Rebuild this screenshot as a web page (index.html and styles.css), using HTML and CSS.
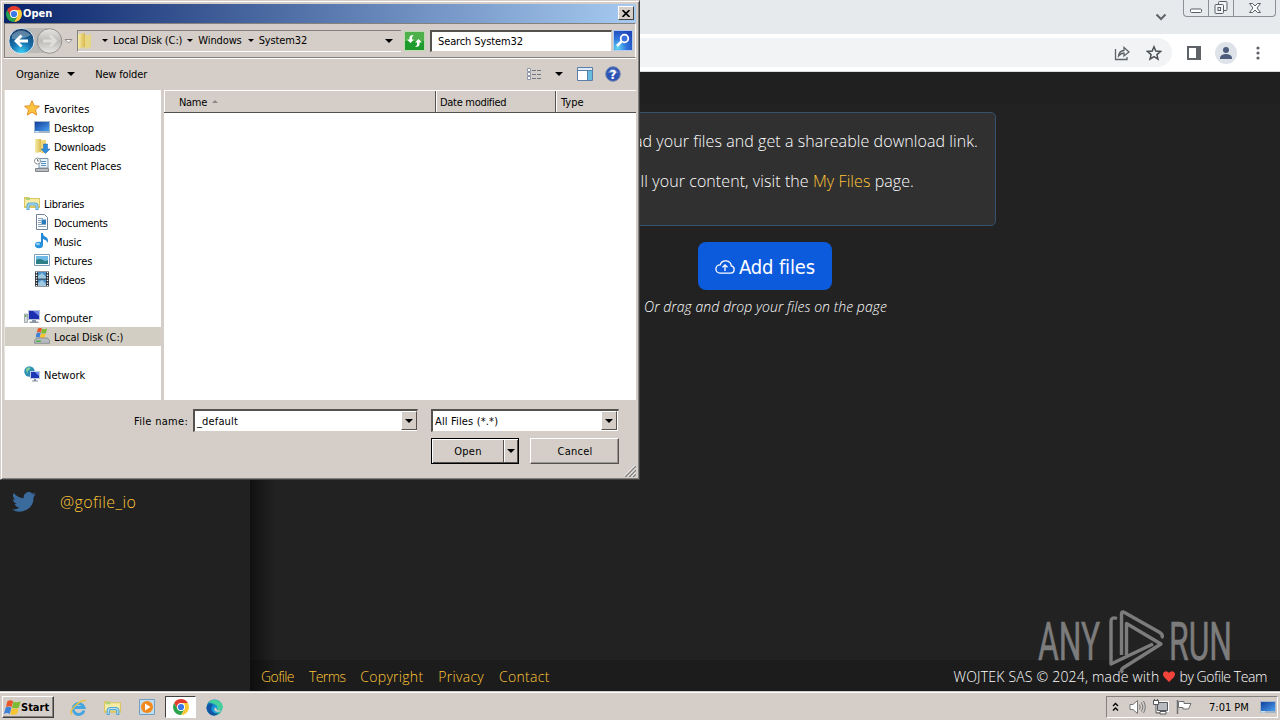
FILE: index.html
```html
<!DOCTYPE html>
<html lang="en">
<head>
  <meta charset="UTF-8">
  <meta name="viewport" content="width=device-width, initial-scale=1.0">
  <title>Gofile</title>
  <link rel="stylesheet" href="styles.css">
</head>
<body>
  <svg class="defs" width="0" height="0">
    <defs>
      <linearGradient id="sky" x1="0" y1="0" x2="1" y2="1">
        <stop offset="0" stop-color="#123f9c"/>
        <stop offset="1" stop-color="#4aa0f0"/>
      </linearGradient>
      <linearGradient id="folder" x1="0" y1="0" x2="1" y2="0">
        <stop offset="0" stop-color="#f7eda6"/>
        <stop offset="1" stop-color="#d9b84e"/>
      </linearGradient>
      <linearGradient id="edge" x1="0" y1="0" x2="1" y2="1">
        <stop offset="0" stop-color="#0c59a4"/>
        <stop offset=".6" stop-color="#1a9fe0"/>
        <stop offset="1" stop-color="#5bd670"/>
      </linearGradient>
      <radialGradient id="orb" cx=".5" cy=".95" r=".9">
        <stop offset="0" stop-color="#3fd0f5"/>
        <stop offset=".45" stop-color="#1673b0"/>
        <stop offset="1" stop-color="#17406d"/>
      </radialGradient>
      <linearGradient id="orb-off" x1="0" y1="0" x2="0" y2="1">
        <stop offset="0" stop-color="#e6e5e3"/>
        <stop offset=".5" stop-color="#bdbbb8"/>
        <stop offset="1" stop-color="#e9e8e6"/>
      </linearGradient>
      <radialGradient id="glass" cx=".2" cy=".9" r="1">
        <stop offset="0" stop-color="#5fd8f2"/>
        <stop offset=".5" stop-color="#2f74de"/>
        <stop offset="1" stop-color="#2347b8"/>
      </radialGradient>
    </defs>
    <symbol id="chrome" viewBox="0 0 16 16">
      <path fill="#e33b2e" d="M1.1 4A8 8 0 0 1 14.9 4L8 4.2 4.6 10z"/>
      <path fill="#fcc934" d="M14.9 4A8 8 0 0 1 8 16L11.4 10 8 4z"/>
      <path fill="#2ba24c" d="M1.1 4A8 8 0 0 0 8 16L11.4 10 8 11.6 4.6 10z"/>
      <circle cx="8" cy="8" r="4" fill="#fff"/>
      <circle cx="8" cy="8" r="3.1" fill="#3b78e7"/>
    </symbol>
    <symbol id="flag" viewBox="0 0 16 16">
      <path fill="#e8562a" d="M3.2 2Q6 .4 8.600 2L7.200 7.600Q4.600 6 1.800 7.600z"/>
      <path fill="#7dbb32" d="M9 2.300Q12 4 15.600 2L14 8Q10.500 9.600 7.600 8z"/>
      <path fill="#3b82d6" d="M1.600 8Q4.300 6.600 7 8.200L5.400 14Q3 12.400 0 14z"/>
      <path fill="#f6c433" d="M7.400 8.500Q10.300 10 13.800 8.600L12.200 14.200Q9 15.600 5.800 14z"/>
    </symbol>
    <symbol id="libraries" viewBox="0 0 16 16">
      <path fill="#dcc660" d="M0 2h5l1 1h10v10H0z"/>
      <path fill="#f6eca5" d="M1 4h14v7H1z"/>
      <path fill="#a9d47c" d="M2 3h4v2H2z"/>
      <path fill="none" stroke="#54a8d8" stroke-width="3" d="M4 15v-4q0-2 2-2h5q2 0 2 2v4"/>
      <path fill="none" stroke="#bfe2f3" d="M4 14v-3q0-2 2-2h5q2 0 2 2v3"/>
    </symbol>
    <symbol id="monitor" viewBox="0 0 16 16">
      <path fill="#a4b7c9" d="M0 2h16v12H0z"/>
      <path fill="url(#sky)" d="M1 3h14v9H1z"/>
      <path fill="#c9e2f5" d="M1 12h4v1.500H1z"/>
    </symbol>
  </svg>

  <div class="screen">
    <!-- browser window -->
    <div class="browser">
      <div class="tabstrip">
        <svg class="tab-search" width="12" height="8" viewBox="0 0 12 8"><path d="M1.500 1.500 6 6l4.500-4.500" fill="none" stroke="#5f6368" stroke-width="2"/></svg>
        <div class="win-buttons">
          <span><svg width="14" height="8" viewBox="0 0 14 8"><rect x="1.500" y="3" width="11" height="3.500" rx="1" fill="#fff" stroke="#5a5f68"/></svg></span>
          <span><svg width="14" height="14" viewBox="0 0 14 14" fill="#f3f4f6" stroke="#5a5f68"><rect x="4.500" y=".5" width="8.500" height="9" rx="1"/><rect x="1" y="3.500" width="8.500" height="9" rx="1"/><rect x="4" y="6.500" width="2.500" height="3"/></svg></span>
          <span class="wide"><svg width="14" height="12" viewBox="0 0 14 12"><path d="M1.500 1.500h3L7 4l2.500-2.500h3L9 6l3.500 4.500h-3L7 8l-2.500 2.500h-3L5 6z" fill="#fff" stroke="#5a5f68"/></svg></span>
        </div>
      </div>
      <div class="toolbar">
        <div class="omnibox">
          <svg width="16" height="16" viewBox="0 0 16 16" fill="none" stroke="#5f6368" stroke-width="1.300"><path d="M1.500 4v10.500H13V12"/><path d="M4.500 11Q5 6 10 5.500V2.500l5 4.500-5 4V8Q7 8 4.500 11z"/></svg>
          <svg width="16" height="16" viewBox="0 0 16 16"><path d="M8 1.800l1.800 4.300 4.700.4-3.600 3.100 1.100 4.600L8 11.700l-4 2.500 1.100-4.600L1.500 6.500l4.700-.4z" fill="none" stroke="#4d5156" stroke-width="1.500"/></svg>
        </div>
        <svg width="14" height="14" viewBox="0 0 14 14"><path fill="#5f6368" d="M0 0h14v14H0z"/><path fill="#fff" d="M2 2h7v10H2z"/></svg>
        <svg class="avatar" width="22" height="22" viewBox="0 0 22 22"><circle cx="11" cy="11" r="11" fill="#dee3ea"/><circle cx="11" cy="8" r="3" fill="#4d5b7c"/><path fill="#4d5b7c" d="M5 17v-1.500Q6 12 11 12t6 3.500V17z"/></svg>
        <svg width="4" height="14" viewBox="0 0 4 14" fill="#5f6368"><circle cx="2" cy="2" r="1.600"/><circle cx="2" cy="7" r="1.600"/><circle cx="2" cy="12" r="1.600"/></svg>
      </div>

      <div class="page">
        <aside class="sidebar">
          <a class="social">
            <svg width="24" height="20" viewBox="0 0 24 20"><path fill="#3b6a9c" d="M24 2.400a10 10 0 0 1-2.800.8A4.900 4.900 0 0 0 23.300.5a10 10 0 0 1-3.100 1.200A4.900 4.900 0 0 0 11.800 6.200 14 14 0 0 1 1.700 1a4.900 4.900 0 0 0 1.500 6.600A5 5 0 0 1 1 7c0 2.400 1.700 4.400 3.900 4.900a5 5 0 0 1-2.200.1 4.900 4.900 0 0 0 4.600 3.400A10 10 0 0 1 0 17.500 14 14 0 0 0 21.500 5z"/></svg>
            <span>@gofile_io</span>
          </a>
        </aside>
        <main class="content">
          <div class="page-top"></div>
          <div class="upload">
            <div class="card">
              <p class="line-one">Upload your files and get a shareable download link.</p>
              <p class="line-two">To see all your content, visit the <a>My Files</a> page.</p>
            </div>
            <button class="add-files">
              <svg width="20" height="14" viewBox="0 0 20 14" fill="none" stroke="#fff" stroke-width="1.300"><path d="M5 13.200h10.500a3.700 3.700 0 0 0 .8-7.300A5.700 5.700 0 0 0 5.200 4.800 4.200 4.200 0 0 0 5 13.200z"/><path d="M10 11V5M7.500 7.300 10 4.800l2.500 2.500"/></svg>
              <span>Add files</span>
            </button>
            <p class="hint">Or drag and drop your files on the page</p>
          </div>
          <footer class="footer">
            <nav>
              <a class="short">Gofile</a><a class="short">Terms</a><a class="long">Copyright</a><a class="long">Privacy</a><a class="long">Contact</a>
            </nav>
            <div class="credits">
              <span class="made">WOJTEK SAS © 2024, made with</span>
              <svg width="12" height="11" viewBox="0 0 12 11"><path fill="#f4433a" d="M6 11 1 6Q-1 3 1 1q2.500-2 5 .8Q8.500-1 11 1q2 2 0 5z"/></svg>
              <span class="team">by Gofile Team</span>
            </div>
          </footer>
        </main>
      </div>
    </div>

    <!-- watermark -->
    <svg class="watermark" width="200" height="66" viewBox="0 0 200 66">
      <text x="0" y="0" transform="translate(2 51) scale(.62 1)" textLength="100" lengthAdjust="spacingAndGlyphs">ANY</text>
      <g fill="none" stroke="#b4b4b4" stroke-width="3.400" stroke-linejoin="round">
        <path d="M81 9.500q-6-2-6 3V55l42-20"/>
        <path d="M85.500 46V5q0-3 3-1.500L123 23q5 3 2.500 6"/>
        <path d="M90.500 46V14.500L125 35 87 59q-3 2 0 4.500"/>
      </g>
      <text x="0" y="0" transform="translate(133 51) scale(.63 1)" textLength="100" lengthAdjust="spacingAndGlyphs">RUN</text>
    </svg>

    <!-- file picker -->
    <div class="dialog">
      <div class="titlebar">
        <svg width="16" height="16"><use href="#chrome"/></svg>
        <span class="title">Open</span>
        <span class="close"><svg width="8" height="7" viewBox="0 0 8 7"><path d="M.5 0 7.500 7M7.500 0 .5 7" stroke="#000" stroke-width="1.600"/></svg></span>
      </div>

      <div class="navbar">
        <svg class="travel" width="68" height="28" viewBox="0 0 68 28">
          <path fill="#bcbab7" d="M12 1h28v25H12z"/>
          <circle cx="13.500" cy="14" r="12.700" fill="url(#orb)" stroke="#dfe6ec"/>
          <path d="M4 8q9-9 19 0-9 5-19 4z" fill="#fff" opacity=".3"/>
          <path fill="none" stroke="#fff" stroke-width="2.800" d="M20 14H9M13.500 8.500 8 14l5.500 5.500"/>
          <circle cx="41.500" cy="14" r="12.300" fill="url(#orb-off)" stroke="#94918e"/>
          <path fill="none" stroke="#dededc" stroke-width="2.800" d="M35 14h11M42 8.500l5.500 5.500-5.500 5.500"/>
          <path d="M57 12.500h7L60.500 16z" fill="#fff" stroke="#8d8a86"/>
        </svg>
        <div class="address">
          <svg class="addr-folder" width="14" height="18" viewBox="0 0 14 18"><path fill="url(#folder)" d="M0 2 7 1v14l-7 2z"/><path fill="#e7d682" d="M7 3h6v12l-6 2z"/></svg>
          <i class="arrow a1"></i><span>Local Disk (C:)</span>
          <i class="arrow a2"></i><span>Windows</span>
          <i class="arrow a3"></i><span>System32</span>
          <i class="arrow big last"></i>
        </div>
        <svg class="refresh" width="21" height="20" viewBox="0 0 21 20"><path fill="#b8dcae" d="M0 0h21v20H0z"/><path fill="#4db04a" d="M1 1h19v18H1z"/><path fill="#1f9a2e" d="M1 10h19v9H1z"/><path d="M9.500 4Q4.500 4 5.500 8.500H3L6.500 12 10 8.500H8V6.500z" fill="#fff"/><path d="M11 16q5.500 0 4.500-4.500H18L14.500 8 11 11.500h2V14z" fill="#fff"/></svg>
        <div class="search">Search System32</div>
        <svg class="search-btn" width="20" height="21" viewBox="0 0 20 21"><path fill="#b5cbed" d="M0 0h20v21H0z"/><path fill="url(#glass)" d="M1 1h18v19H1z"/><circle cx="11.500" cy="8.500" r="3.800" fill="#3c70df" stroke="#fff" stroke-width="1.800"/><path d="m8.500 11.500-4.500 4.500" stroke="#fff" stroke-width="2.600"/></svg>
      </div>

      <div class="commands">
        <span class="cmd-org">Organize</span><i class="arrow big"></i>
        <span class="cmd-new">New folder</span>
        <div class="cmd-right">
          <svg width="16" height="13" viewBox="0 0 16 13"><path d="M1.500.500h3v3h-3zM1.500 4.500h3v3h-3zM1.500 8.500h3v3h-3z" fill="#fff" stroke="#8f96a5"/><path d="M6 2.500h4M11 2.500h4M6 6.500h4M11 6.500h4M6 10.500h4M11 10.500h4" stroke="#6d7686"/></svg>
          <i class="arrow big"></i>
          <svg class="preview" width="16" height="14" viewBox="0 0 16 14"><path fill="#fff" stroke="#5a7ea8" d="M.5.500h15v13H.5z"/><path fill="#dcebf6" d="M1 1h14v2H1z"/><path fill="#66bcdc" d="M10 3h5v10h-5z"/><path stroke="#5a7ea8" d="M1 3.500h14M10.500 3v10"/></svg>
          <svg width="16" height="16" viewBox="0 0 16 16"><circle cx="8" cy="8" r="7.300" fill="#2d54b4" stroke="#7086b0"/><path d="M2.500 7q5-9 11 0z" fill="#fff" opacity=".25"/><text class="q" x="8" y="12.500">?</text></svg>
        </div>
      </div>

      <div class="panes">
        <div class="tree">
          <div class="node"><svg width="16" height="16" viewBox="0 0 16 16"><path d="M8 .7l2.200 5 5.300.5-4 3.600 1.200 5.300L8 12.300l-4.700 2.800 1.200-5.300-4-3.600 5.300-.5z" fill="#fcc340" stroke="#e08a20" stroke-width=".9"/></svg><span class="loose">Favorites</span></div>
          <div class="node sub"><svg width="16" height="16"><use href="#monitor"/></svg><span class="snug">Desktop</span></div>
          <div class="node sub"><svg width="16" height="16" viewBox="0 0 16 16"><path fill="url(#folder)" d="M1 1h6v13l-6 1z"/><path fill="#efd67a" d="M7 2h5v13H7z"/><path fill="#2f8bd9" stroke="#1c66b0" stroke-width=".5" d="M9.500 6h4v5H16l-4.500 4.500L7 11h2.500z"/></svg><span class="tight">Downloads</span></div>
          <div class="node sub"><svg width="16" height="16" viewBox="0 0 16 16"><path fill="#e9f2f8" stroke="#7896a8" d="M5 1.500h9V11H5z"/><path stroke="#5b93bf" d="M7 4.500h5M7 6.500h5M7 8.500h5"/><path fill="#b9bdc0" stroke="#80868b" d="M1.500 11.500h13v3h-13z"/><circle cx="3.500" cy="4" r="3" fill="#fff" stroke="#8c969d"/><path d="M3.500 2v2h1.500" fill="none" stroke="#555" stroke-width=".8"/></svg><span class="snug">Recent Places</span></div>
          <div class="node gap"></div>
          <div class="node"><svg width="16" height="16"><use href="#libraries"/></svg><span class="tight">Libraries</span></div>
          <div class="node sub"><svg width="16" height="16" viewBox="0 0 16 16"><path fill="#fff" stroke="#71839a" d="M2.500.500h8l3 3v12h-11z"/><path stroke="#8aa3c0" d="M4 4.500h5M4 6.500h3M4 8.500h3M4 10.500h8M4 12.500h8"/><path fill="#2b7bb9" d="M7.500 5.500H12V10H7.500z"/></svg><span class="tight">Documents</span></div>
          <div class="node sub"><svg width="16" height="16" viewBox="0 0 16 16"><path fill="#2488d6" d="M7 0h2q0 3 3 4 3 2 1.500 6Q13 7 9 6v6H7z"/><ellipse cx="5" cy="12" rx="4" ry="3.200" fill="#2a93de"/><ellipse cx="4" cy="11" rx="2" ry="1.200" fill="#8fd0f5"/></svg><span class="snug">Music</span></div>
          <div class="node sub"><svg width="16" height="16" viewBox="0 0 16 16"><path fill="#fff" stroke="#7ba0bd" d="M.5 2.500h15v11H.5z"/><path fill="#6fb9e6" d="M2 4h12v5H2z"/><path fill="#2d7f86" d="M2 8q4-2 7 0t5 0v4H2z"/></svg><span class="snug">Pictures</span></div>
          <div class="node sub"><svg width="16" height="16" viewBox="0 0 16 16"><path fill="#252b33" d="M1 .5h14v15H1z"/><path fill="#4b93c8" d="M4 1h8v6.500H4zM4 8.500h8V15H4z"/><path fill="#9fc7df" d="m4 5 4-3 4 4v1.500H4zM4 12l4-3 4 4v2H4z"/><path d="M2.500 1v14M13.500 1v14" stroke="#fff" stroke-width="1.400" stroke-dasharray="1.300 1.300"/></svg><span class="tight">Videos</span></div>
          <div class="node gap"></div>
          <div class="node"><svg width="16" height="16" viewBox="0 0 16 16"><path fill="#d9dedf" stroke="#7d8a8d" stroke-width=".7" d="M.4 5h3v8.500h-3z"/><path fill="#6aa84f" d="M1 6h1.500v2H1z"/><path fill="#b9c3d8" d="M4 1h12v10H4z"/><path fill="#1c2fae" d="M5 2h10v8H5z"/><path fill="#6f86e8" d="M9 2h6v5z"/><path fill="#8c95a5" d="M8 11h4v1.500h2.500V14h-9v-1.500H8z"/></svg><span class="snug">Computer</span></div>
          <div class="node sub selected"><svg width="16" height="16" viewBox="0 0 16 16"><use href="#flag" x="1.500" y="-1" width="12" height="12"/><path fill="#b6bbbf" stroke="#737b80" stroke-width=".7" d="M2.500 10h11l2 2.500v2.800H.5v-2.800z"/><path fill="#54b044" d="M2 12.500h5v1.500H2z"/></svg><span class="snug">Local Disk (C:)</span></div>
          <div class="node gap"></div>
          <div class="node"><svg width="16" height="16" viewBox="0 0 16 16"><circle cx="5.500" cy="5.500" r="5.200" fill="#2b8fb3"/><path fill="#7fd29b" d="M2 3q3-3 5-1L4 5 3 8z"/><path fill="#c2cce0" d="M6 5h10v8H6z"/><path fill="#1c36b5" d="M7 6h8v6H7z"/><path fill="#6f8ff0" d="M11 6h4v4z"/><path fill="#8490a5" d="M10 13h2v1.500h2v1H8v-1h2z"/></svg><span>Network</span></div>
        </div>
        <div class="list">
          <div class="columns">
            <div class="col name"><span>Name</span><i class="sort"></i></div>
            <div class="col date"><span class="tight">Date modified</span></div>
            <div class="col type"><span>Type</span></div>
          </div>
        </div>
      </div>

      <div class="bottom">
        <div class="row">
          <label>File name:</label>
          <div class="combo file"><span>_default</span><b><i class="arrow big"></i></b></div>
          <div class="combo filter"><span>All Files (*.*)</span><b><i class="arrow big"></i></b></div>
        </div>
        <div class="row buttons">
          <div class="btn open"><span>Open</span><b><i class="arrow big"></i></b></div>
          <div class="btn cancel"><span>Cancel</span></div>
        </div>
        <svg class="grip" width="12" height="12" viewBox="0 0 12 12"><path d="M1 12 12 1M5 12l7-7M9 12l3-3" stroke="#808080" stroke-width="1.500"/><path d="M0 11.500 11.500 0M4 11.500l8-8M8 11.500l4-4" stroke="#fff" stroke-width=".8"/></svg>
      </div>
    </div>

    <!-- taskbar -->
    <div class="taskbar">
      <div class="start"><svg width="17" height="17"><use href="#flag"/></svg><span>Start</span></div>
      <div class="quick">
        <span><svg width="17" height="17" viewBox="0 0 17 17"><path d="M14 11.500A5.500 5.500 0 1 1 14 8.500H5" fill="none" stroke="#45a5e0" stroke-width="2.800"/><path d="M2 15.500Q-1 12 6 6T16 2" fill="none" stroke="#e8c13f" stroke-width="1.400"/></svg></span>
        <span><svg width="17" height="17"><use href="#libraries"/></svg></span>
        <span><svg width="16" height="16" viewBox="0 0 16 16"><path fill="#c5dcec" stroke="#6da0c8" d="M.5.500h15v15H.5z"/><circle cx="8" cy="8" r="6" fill="#f08a1c"/><path fill="#fff" d="m6 4.500 5.500 3.500L6 11.500z"/></svg></span>
        <span class="running"><svg width="16" height="16"><use href="#chrome"/></svg></span>
        <span><svg width="17" height="17" viewBox="0 0 17 17"><circle cx="8.500" cy="8.500" r="8" fill="url(#edge)"/><path fill="#45cf9d" d="M2 4Q6-1 12 1.500q6 3 4.500 8-2 2.500-5.500 1.500 1.500-4-2-5.500Q5 3 2 4z"/><path fill="#1256a3" d="M.6 8Q2 4 7 5.500 4 8 6 12q2 3 7 2.500-5 4-9.500.5Q0 12 .6 8z"/><path fill="#d5cec8" d="M9 8.500Q7 11 10 12.500q3 1 6-.8-2-.2-5.500-.7 1-1.500-1.500-2.500z"/></svg></span>
      </div>
      <div class="tray">
        <svg width="7" height="10" viewBox="0 0 7 10" fill="none" stroke="#000" stroke-width="1.400"><path d="m1 4 2.500-2.500L6 4M1 8.500 3.500 6 6 8.500"/></svg>
        <svg class="vol" width="17" height="16" viewBox="0 0 17 16" fill="none" stroke="#75777a"><path fill="#fff" d="M1 5.500h3L8.500 1.500v13L4 10.500H1z"/><path d="M10.500 5.500q1.500 2.500 0 5M12.500 3.500q3 4.500 0 9M14.500 2q3.500 6 0 12"/></svg>
        <svg class="net" width="16" height="16" viewBox="0 0 16 16" stroke="#55585c"><path fill="#b8bbbd" stroke="#fff" stroke-width="3" d="M4.500 3.500h10v8h-10z"/><path fill="#b8bbbd" d="M4.500 3.500h10v8h-10z"/><path fill="#fff" d="M.5 1.500h5v4h-5zM7 12.500h6V15H7z"/><path fill="none" d="M3 6v8h4M1.500 0v2M4.500 0v2"/></svg>
        <svg class="action" width="16" height="16" viewBox="0 0 16 16"><path d="M1.500 1v14" stroke="#6d7073" stroke-width="1.500"/><path fill="#fff" stroke="#6d7073" d="M2.500 2.500H8v2h7L12.500 10H7V8.500H2.500z"/></svg>
        <span class="clock">7:01 PM</span>
        <svg class="desk" width="16" height="14" viewBox="0 1 16 14"><use href="#monitor" width="16" height="16"/></svg>
      </div>
    </div>
  </div>
</body>
</html>
```

FILE: styles.css
```css
* {
  box-sizing: border-box;
}
body {
  margin: 0;
  font-family: "DejaVu Sans Condensed", "DejaVu Sans", sans-serif;
  font-size: 11px;
  color: #000;
}
svg {
  display: block;
  flex: none;
}
p {
  margin: 0;
}
.defs {
  position: absolute;
}
.screen {
  position: relative;
  width: 1280px;
  height: 720px;
  overflow: hidden;
  display: flex;
  flex-direction: column;
  background: #222;
}

/* browser */
.browser {
  flex: 1;
  display: flex;
  flex-direction: column;
  min-height: 0;
}
.tabstrip {
  height: 34px;
  flex: none;
  background: #e6eaed;
  display: flex;
  justify-content: flex-end;
  align-items: flex-start;
  padding-right: 4px;
}
.tab-search {
  margin: 13px 16px 0 0;
}
.win-buttons {
  display: flex;
  height: 17px;
  border: 1px solid #8b8f96;
  border-top: 0;
  border-radius: 0 0 4px 4px;
}
.win-buttons span {
  width: 25px;
  display: flex;
  align-items: center;
  justify-content: center;
  border-right: 1px solid #8b8f96;
}
.win-buttons span:first-child svg {
  margin-top: 4px;
}
.win-buttons .wide {
  width: 41px;
  border-right: 0;
}
.toolbar {
  height: 38px;
  flex: none;
  background: #fff;
  border-bottom: 1px solid #d9dbde;
  display: flex;
  align-items: center;
  padding-right: 20px;
}
.omnibox {
  flex: 1;
  height: 29px;
  margin-right: 15px;
  border-radius: 15px;
  background: #f1f3f4;
  display: flex;
  align-items: center;
  justify-content: flex-end;
  gap: 16px;
  padding-right: 10px;
}
.avatar {
  margin: 0 19px 0 14px;
}

/* gofile page */
.page {
  flex: 1;
  display: flex;
  min-height: 0;
  background: #222;
  color: #fff;
  font-family: "Open Sans", "Noto Sans", sans-serif;
  font-weight: 300;
  font-size: 16px;
}
.page a {
  color: #ffc638;
}
.sidebar {
  width: 250px;
  background: #212121;
  padding-top: 420px;
}
.social {
  display: flex;
  align-items: center;
  gap: 24px;
  padding-left: 12px;
  height: 20px;
  letter-spacing: .4px;
}
.content {
  flex: 1;
  display: flex;
  flex-direction: column;
  background: linear-gradient(90deg, #111, #222 26px);
}
.page-top {
  height: 32px;
  background: #202020;
}
.upload {
  flex: 1;
  display: flex;
  flex-direction: column;
  align-items: center;
  padding-top: 8px;
}
.card {
  width: 462px;
  height: 114px;
  background: #303030;
  border: 1px solid #34526b;
  border-radius: 5px;
  padding: 17px 17px;
  text-align: right;
  white-space: nowrap;
  line-height: 22px;
  letter-spacing: .08px;
}
.line-one {
  margin-bottom: 18px;
}
.line-two {
  padding-right: 64px;
}
.add-files {
  width: 134px;
  height: 48px;
  margin: 16px 0 6px;
  padding: 2px 0 0;
  display: flex;
  align-items: center;
  justify-content: center;
  gap: 4px;
  border: 0;
  border-radius: 8px;
  background: #0d5bdd;
  color: #fff;
  font-family: "DejaVu Sans Condensed", sans-serif;
  font-size: 20px;
  letter-spacing: -.15px;
}
.hint {
  padding-left: 1px;
  font-size: 14px;
  font-style: italic;
  line-height: 22px;
  letter-spacing: .05px;
}
.footer {
  height: 31px;
  display: flex;
  align-items: center;
  justify-content: space-between;
  padding: 2px 13px 0 11px;
  background: linear-gradient(90deg, #0e0e0e, #1c1c1c 26px);
  font-size: 14px;
}
.footer nav {
  display: flex;
  gap: 15px;
}
.short {
  letter-spacing: -.6px;
}
.long {
  letter-spacing: .28px;
}
.credits {
  display: flex;
  align-items: center;
  gap: 4px;
}
.made {
  letter-spacing: .2px;
}
.team {
  letter-spacing: -.42px;
}
.watermark {
  position: absolute;
  left: 1036px;
  top: 609px;
  opacity: .62;
}
.watermark text {
  font-family: Roboto, sans-serif;
  font-size: 53px;
  fill: #b4b4b4;
  stroke: #b4b4b4;
  stroke-width: .6px;
}

/* dialog */
.arrow {
  border: 3px solid transparent;
  border-top-color: #000;
  border-bottom: 0;
  flex: none;
}
.arrow.big {
  border-width: 4px 4px 0;
}
.tight {
  letter-spacing: -.3px;
}
.snug {
  letter-spacing: -.12px;
}
.loose {
  letter-spacing: .1px;
}
.dialog {
  position: absolute;
  left: 0;
  top: 0;
  width: 640px;
  height: 480px;
  background: #d5cec8;
  border: 1px solid #d5cec8;
  border-right: 1px solid #404040;
  border-bottom: 1px solid #404040;
  box-shadow: inset 1px 1px #fff, inset -1px -1px #808080;
  padding: 3px 3px 0 3px;
  display: flex;
  flex-direction: column;
}
.titlebar {
  height: 19px;
  display: flex;
  align-items: center;
  padding: 0 2px;
  background: linear-gradient(90deg, #0a246a, #a6caf0);
  color: #fff;
  font-weight: bold;
}
.title {
  flex: 1;
  margin-left: 1px;
}
.close {
  width: 16px;
  height: 14px;
  margin-top: -1px;
  display: flex;
  align-items: center;
  justify-content: center;
  background: #d5cec8;
  border: 1px solid;
  border-color: #fff #404040 #404040 #fff;
}
.navbar {
  height: 35px;
  display: flex;
  align-items: center;
  border: 1px solid #85827d;
  border-right-color: #fff;
  border-bottom-color: #85827d;
  box-shadow: 0 1px #fff;
  padding-left: 3px;
  letter-spacing: -.12px;
}
.address {
  width: 324px;
  height: 22px;
  margin-left: 1px;
  display: flex;
  align-items: center;
  border: 1px solid #85827d;
  border-right: 0;
  border-bottom-color: #fff;
}
.a1 {
  margin: 0 5px 0 10px;
}
.a2, .a3 {
  margin: 0 5px;
}
.a3 {
  margin-left: 6px;
}
.last {
  margin-left: auto;
  margin-right: 8px;
}
.refresh {
  margin-left: 3px;
}
.search {
  width: 182px;
  height: 22px;
  margin: 0 1px 0 5px;
  padding-left: 6px;
  line-height: 19px;
  background: #fff;
  border: 2px solid;
  border-width: 2px 1px 1px 2px;
  border-color: #55524e #d5cec8 #d5cec8 #55524e;
}
.commands {
  height: 32px;
  display: flex;
  align-items: center;
  padding-left: 12px;
}
.cmd-org {
  margin-right: 8px;
  letter-spacing: -.15px;
}
.cmd-new {
  margin-left: 20px;
  letter-spacing: -.15px;
}
.cmd-right {
  flex: 1;
  display: flex;
  align-items: center;
  justify-content: flex-end;
  gap: 13px;
  padding-right: 15px;
}
.preview {
  margin-left: 1px;
  margin-right: -1px;
}
.q {
  font-family: "DejaVu Sans", sans-serif;
  font-weight: bold;
  font-size: 12px;
  fill: #fff;
  text-anchor: middle;
}
.panes {
  height: 310px;
  display: flex;
  gap: 3px;
}
.tree {
  width: 157px;
  background: #fff;
  padding-top: 9px;
  border-left: 1px solid #e7e3df;
}
.node {
  height: 19px;
  display: flex;
  align-items: center;
  gap: 4px;
  padding: 2px 0 0 19px;
}
.node.sub {
  padding-left: 29px;
}
.node svg {
  margin-top: -3px;
}
.selected {
  background: #d3cec4;
}
.list {
  flex: 1;
  background: #fff;
}
.columns {
  display: flex;
  height: 23px;
  background: #d5cec8;
  border-top: 1px solid #fff;
  border-bottom: 1px solid #55524e;
}
.col {
  display: flex;
  align-items: center;
  border-right: 1px solid #55524e;
  box-shadow: inset 1px 0 #fff;
  padding: 2px 0 0 4px;
}
.name {
  width: 272px;
  padding-left: 15px;
  letter-spacing: -.3px;
}
.date {
  width: 120px;
}
.type {
  flex: 1;
  border-right: 0;
  padding-left: 5px;
}
.sort {
  margin-left: 5px;
  margin-top: -3px;
  border: 3px solid transparent;
  border-top: 0;
  border-bottom-color: #8c8883;
}
.bottom {
  flex: 1;
  position: relative;
  padding: 9px 0 0 130px;
}
.row {
  display: flex;
  align-items: center;
}
.row label {
  width: 59px;
  padding-top: 1px;
  letter-spacing: .3px;
}
.combo {
  display: flex;
  height: 23px;
  padding: 0 1px 1px 2px;
  background: #fff;
  border: 2px solid;
  border-width: 2px 1px 1px 2px;
  border-color: #55524e #d5cec8 #d5cec8 #55524e;
  align-items: center;
}
.combo span {
  flex: 1;
  padding-top: 1px;
  letter-spacing: .15px;
}
.combo b {
  width: 16px;
  height: 19px;
  display: flex;
  align-items: center;
  justify-content: center;
  background: #d5cec8;
  border: 1px solid;
  border-color: #fff #55524e #55524e #fff;
}
.file {
  width: 225px;
  margin-right: 13px;
  padding-right: 0;
}
.filter {
  width: 188px;
}
.buttons {
  margin-top: 6px;
  padding-left: 297px;
  gap: 11px;
}
.btn {
  display: flex;
  height: 26px;
  align-items: center;
  border: 1px solid;
  border-color: #fff #55524e #55524e #fff;
  box-shadow: inset -1px -1px #9b9690;
}
.btn span {
  flex: 1;
  padding-left: 1px;
  text-align: center;
  letter-spacing: .25px;
}
.btn b {
  width: 15px;
  height: 22px;
  display: flex;
  align-items: center;
  justify-content: center;
  border-left: 1px solid #55524e;
  box-shadow: inset 1px 0 #fff;
}
.open {
  width: 88px;
  border-color: #000;
  box-shadow: inset 1px 1px #fff, inset -1px -1px #55524e;
}
.cancel {
  width: 89px;
}
.grip {
  position: absolute;
  right: 0;
  bottom: 2px;
}

/* taskbar */
.taskbar {
  height: 29px;
  flex: none;
  background: #d5cec8;
  border-top: 1px solid #d5cec8;
  box-shadow: inset 0 1px #fff;
  display: flex;
  align-items: center;
  padding: 2px 2px 0;
}
.start {
  width: 52px;
  height: 22px;
  display: flex;
  align-items: center;
  padding-left: 1px;
  font-weight: bold;
  font-size: 11px;
  border: 1px solid;
  border-color: #fff #404040 #404040 #fff;
  box-shadow: inset -1px -1px #85827d;
}
.quick {
  display: flex;
  margin-left: 9px;
  gap: 3px;
}
.quick span {
  width: 31px;
  height: 22px;
  display: flex;
  align-items: center;
  justify-content: center;
}
.quick .running {
  background: #fff;
  border: 1px solid;
  border-color: #404040 #fff #fff #404040;
}
.tray {
  width: 172px;
  height: 22px;
  margin-left: auto;
  display: flex;
  align-items: center;
  padding-left: 5px;
  border: 1px solid;
  border-color: #85827d #fff #fff #85827d;
}
.vol {
  margin-left: 10px;
}
.net, .action {
  margin-left: 7px;
}
.clock {
  margin-left: 17px;
  flex: 1;
}
.desk {
  margin-right: 1px;
}
```
